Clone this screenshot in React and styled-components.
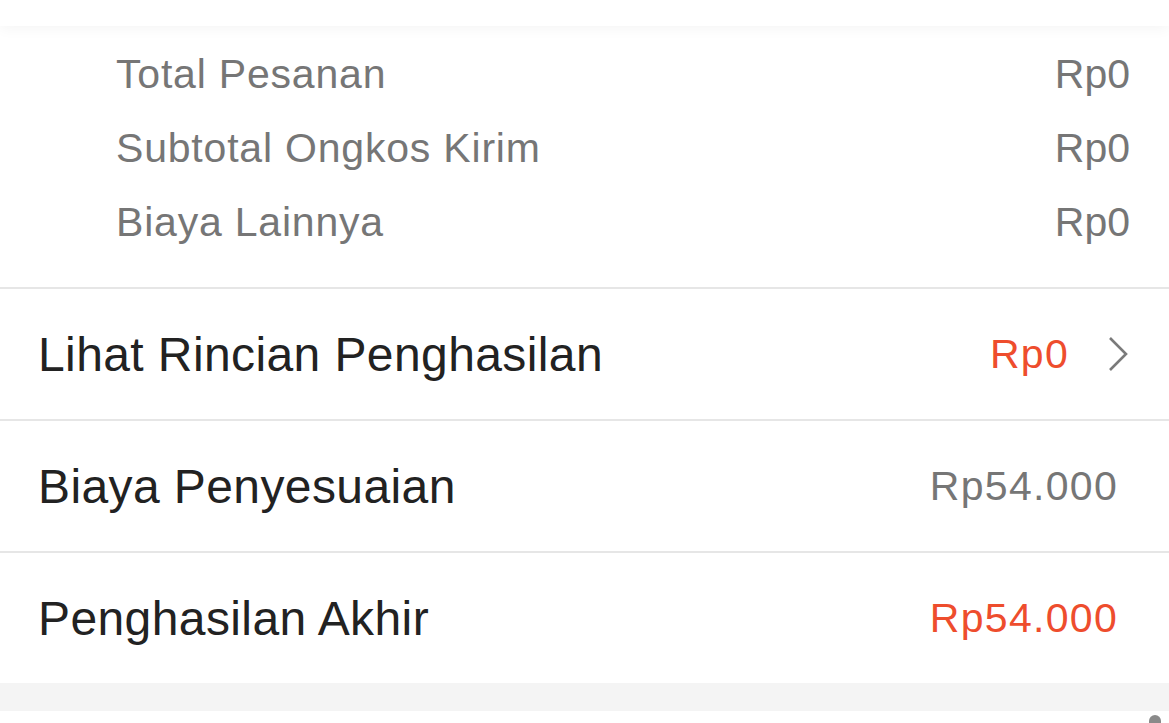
import React from "react";
import styled, { createGlobalStyle } from "styled-components";

const GlobalStyle = createGlobalStyle`
  html, body {
    margin: 0;
    padding: 0;
    background: #ffffff;
    font-family: "Liberation Sans", Arial, sans-serif;
    -webkit-font-smoothing: antialiased;
  }
`;

const Page = styled.div`
  width: 100%;
  min-height: 723px;
  display: flex;
  flex-direction: column;
  background: #ffffff;
  overflow: hidden;
`;

const TopBar = styled.div`
  height: 26px;
  background: #ffffff;
  box-shadow: 0 3px 14px rgba(0, 0, 0, 0.045);
  position: relative;
  z-index: 1;
`;

const Summary = styled.div`
  padding: 11px 39px 28px 116px;
  display: flex;
  flex-direction: column;
`;

const SmallRow = styled.div`
  height: 74px;
  display: flex;
  align-items: center;
  justify-content: space-between;
  font-size: 41px;
  line-height: 74px;
  color: #767676;
`;

const SmallLabel = styled.span`
  letter-spacing: 0.8px;
`;

const BigRow = styled.div`
  height: 130px;
  border-top: 2px solid #e6e6e6;
  padding: 0 ${({ $right }) => $right || 51}px 0 38px;
  display: flex;
  align-items: center;
  justify-content: space-between;
`;

const Label = styled.span`
  font-size: 48px;
  letter-spacing: 0.4px;
  color: #222222;
`;

const Value = styled.span`
  font-size: 41px;
  letter-spacing: 1.3px;
  color: ${({ $accent }) => ($accent ? "#ee4d2d" : "#767676")};
`;

const Right = styled.div`
  display: flex;
  align-items: center;
  gap: 38px;
`;

const Gap = styled.div`
  height: 28px;
  background: #f4f4f4;
`;

const Footer = styled.div`
  flex: 1;
  background: #ffffff;
  position: relative;
`;

const Knob = styled.div`
  position: absolute;
  right: 8px;
  top: 4px;
  width: 12px;
  height: 12px;
  border-radius: 6px 6px 2px 2px;
  background: #8a8a8a;
`;

const Chevron = () => (
  <svg width="22" height="36" viewBox="0 0 22 36">
    <polyline
      points="3,2 19,18 3,34"
      fill="none"
      stroke="#7a7a7a"
      strokeWidth="2.6"
    />
  </svg>
);

const summary = [
  { label: "Total Pesanan", value: "Rp0" },
  { label: "Subtotal Ongkos Kirim", value: "Rp0" },
  { label: "Biaya Lainnya", value: "Rp0" },
];

const App = () => {
  return (
    <Page>
      <GlobalStyle />
      <TopBar />
      <Summary>
        {summary.map((row) => (
          <SmallRow key={row.label}>
            <SmallLabel>{row.label}</SmallLabel>
            <span>{row.value}</span>
          </SmallRow>
        ))}
      </Summary>
      <BigRow $right={40}>
        <Label>Lihat Rincian Penghasilan</Label>
        <Right>
          <Value $accent>Rp0</Value>
          <Chevron />
        </Right>
      </BigRow>
      <BigRow>
        <Label>Biaya Penyesuaian</Label>
        <Value>Rp54.000</Value>
      </BigRow>
      <BigRow>
        <Label>Penghasilan Akhir</Label>
        <Value $accent>Rp54.000</Value>
      </BigRow>
      <Gap />
      <Footer>
        <Knob />
      </Footer>
    </Page>
  );
};

export default App;
